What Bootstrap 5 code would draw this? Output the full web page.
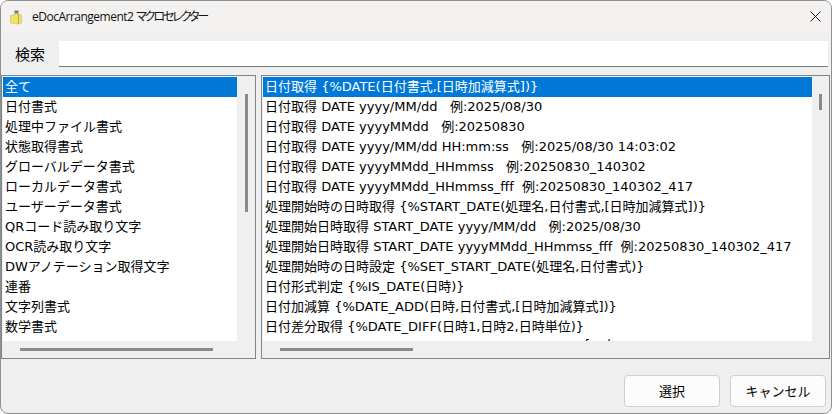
<!DOCTYPE html>
<html lang="ja"><head><meta charset="utf-8">
<link href="https://cdn.jsdelivr.net/npm/bootstrap@5.3.0/dist/css/bootstrap.min.css" rel="stylesheet">
<style>
html,body{height:100%;margin:0;background:#fff;overflow:hidden}
body{font-family:"DejaVu Sans","Noto Sans CJK JP",sans-serif;font-size:13px;color:#000}
.win{height:414px;width:832px;border:1px solid #8f8f8f;border-radius:8px;background:#efefef;overflow:hidden}
.tbar{height:31px;background:#f3f2f1;padding-left:8px;font-size:12px;color:#111;flex:none;font-family:"Open Sans","Noto Sans CJK JP",sans-serif}
.ttl{margin-left:7px;letter-spacing:-.5px}
.kana{font-feature-settings:"palt";letter-spacing:-2.1px}
.srch{height:43px;padding:9px 3px 8px 14px;flex:none}
.srch label{font-size:15px;width:44px;font-family:"Noto Sans CJK JP",sans-serif}
.inp{flex:1;height:26px;background:#fff;border-bottom:1px solid #7a7a7a}
.panes{height:284px;flex:none;gap:5px;padding-right:1px}
.pane{background:#efefef;border:1px solid #7f858c;padding:1px 0 1px 1px;min-width:0}
.pl{width:255px;flex:none}.pr{flex:1}
.lst{flex:1;background:#fff;overflow:hidden;min-width:0;height:264px}
.rowi{height:20px;line-height:19px;padding-left:2px;white-space:nowrap}
.rowi.sel{background:#0078d7;color:#fff}
.vs{width:18px;flex:none;padding-top:17px;display:flex;justify-content:center}
.pr .vs{width:17px}
.vt{width:3px;background:#8a8a8a}
.hs{height:16px;flex:none;display:flex;align-items:center}
.ht{height:3px;background:#8a8a8a;margin-left:17px}
.foot{flex:1;padding:0 5px 6px 0;gap:10px}
.bt{width:96px;height:32px;background:#fcfcfc;border:1px solid #cfcfcf;border-radius:4px;font-size:13px;padding:0;color:#000;font-family:"Noto Sans CJK JP",sans-serif}
.cut{padding-left:322px;margin-top:-2px}
.cut span{margin-left:16px}
</style></head><body>
<div class="win d-flex flex-column">
<div class="tbar d-flex align-items-center">
<svg width="16" height="16" viewBox="0 0 16 16"><path d="M5 1h5v5H5z" fill="#bdbdbd"/><path d="M6 2h3v2H6z" fill="#777"/><path d="M1.500 6.500l8-1.500 3 1v8l-3 1-8-1z" fill="#f0e06e" stroke="#d8c456" stroke-width=".7"/><path d="M9.500 5v10" stroke="#c4ae42"/></svg>
<span class="ttl">eDocArrangement2 <span class="kana">マクロセレクター</span></span>
<svg class="ms-auto" style="margin-right:10px" width="11" height="11" viewBox="0 0 11 11"><path d="M.5.5l10 10M10.500.5l-10 10" stroke="#1a1a1a" fill="none"/></svg></div>
<div class="srch d-flex align-items-center"><label>検索</label><div class="inp"></div></div>
<div class="panes d-flex">
<div class="pane pl d-flex flex-column">
<div class="d-flex flex-grow-1"><div class="lst">
<div class="rowi sel">全て</div><div class="rowi">日付書式</div><div class="rowi">処理中ファイル書式</div><div class="rowi">状態取得書式</div><div class="rowi">グローバルデータ書式</div><div class="rowi">ローカルデータ書式</div><div class="rowi">ユーザーデータ書式</div><div class="rowi">QRコード読み取り文字</div><div class="rowi">OCR読み取り文字</div><div class="rowi">DWアノテーション取得文字</div><div class="rowi">連番</div><div class="rowi">文字列書式</div><div class="rowi">数学書式</div>
</div><div class="vs"><div class="vt" style="height:118px"></div></div></div>
<div class="hs"><div class="ht" style="width:193px"></div></div>
</div>
<div class="pane pr d-flex flex-column">
<div class="d-flex flex-grow-1"><div class="lst">
<div class="rowi sel">日付取得 {%DATE(日付書式,[日時加減算式])}</div>
<div class="rowi">日付取得 DATE yyyy/MM/dd&nbsp;&nbsp; 例:2025/08/30</div>
<div class="rowi">日付取得 DATE yyyyMMdd&nbsp;&nbsp; 例:20250830</div>
<div class="rowi">日付取得 DATE yyyy/MM/dd HH:mm:ss&nbsp;&nbsp; 例:2025/08/30 14:03:02</div>
<div class="rowi">日付取得 DATE yyyyMMdd_HHmmss&nbsp;&nbsp; 例:20250830_140302</div>
<div class="rowi">日付取得 DATE yyyyMMdd_HHmmss_fff&nbsp; 例:20250830_140302_417</div>
<div class="rowi">処理開始時の日時取得 {%START_DATE(処理名,日付書式,[日時加減算式])}</div>
<div class="rowi">処理開始日時取得 START_DATE yyyy/MM/dd&nbsp;&nbsp; 例:2025/08/30</div>
<div class="rowi">処理開始日時取得 START_DATE yyyyMMdd_HHmmss_fff&nbsp; 例:20250830_140302_417</div>
<div class="rowi">処理開始時の日時設定 {%SET_START_DATE(処理名,日付書式)}</div>
<div class="rowi">日付形式判定 {%IS_DATE(日時)}</div>
<div class="rowi">日付加減算 {%DATE_ADD(日時,日付書式,[日時加減算式])}</div>
<div class="rowi">日付差分取得 {%DATE_DIFF(日時1,日時2,日時単位)}</div>
<div class="rowi cut">[<span>(</span></div>
</div><div class="vs"><div class="vt" style="height:16px"></div></div></div>
<div class="hs"><div class="ht" style="width:133px"></div></div>
</div>
</div>
<div class="foot d-flex justify-content-end align-items-end"><button class="bt">選択</button><button class="bt">キャンセル</button></div>
</div>
</body></html>
